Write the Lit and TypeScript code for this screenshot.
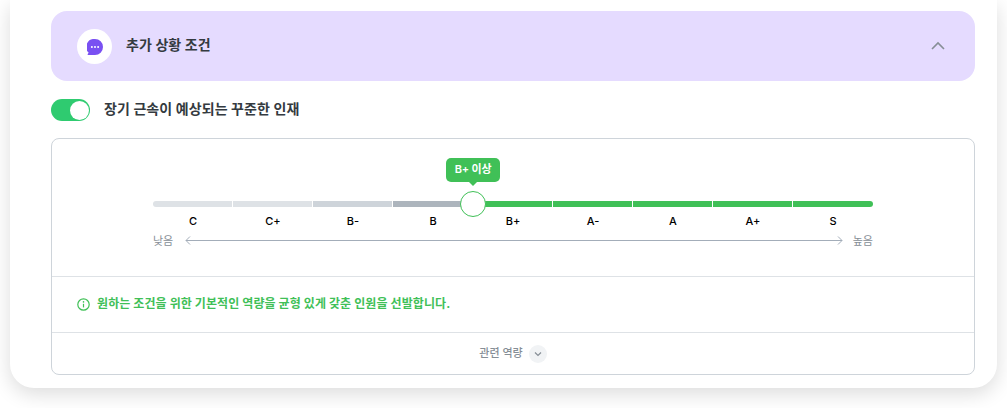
import { LitElement, html, css } from "lit";
import { customElement } from "lit/decorators.js";

const GRADES = ["C", "C+", "B-", "B", "B+", "A-", "A", "A+", "S"];
const SEG = ["seg-1", "seg-1", "seg-2", "seg-3", "on", "on", "on", "on", "on"];

@customElement("app-root")
export class AppRoot extends LitElement {
  static styles = css`
    :host {
      display: block;
      width: 1007px;
      height: 408px;
      overflow: hidden;
      background: #fff;
      font-family: Inter, "Noto Sans CJK KR", sans-serif;
      color: #343a40;
    }
    .card {
      margin: 0 10px;
      height: 388px;
      box-sizing: border-box;
      padding: 11px 22px 13px 41px;
      background: #fff;
      border-radius: 0 0 24px 24px;
      box-shadow: 0 6px 20px rgba(0, 0, 0, 0.14);
    }
    .head {
      height: 70px;
      box-sizing: border-box;
      padding: 0 29px 0 26px;
      display: flex;
      align-items: center;
      background: #e5dbff;
      border-radius: 16px;
    }
    .avatar {
      width: 35px;
      height: 35px;
      margin-top: 1px;
      border-radius: 50%;
      background: #fff;
      display: flex;
      align-items: center;
      justify-content: center;
    }
    .title {
      margin-left: 14px;
      flex: 1;
      font-size: 14px;
      font-weight: 700;
      line-height: 20px;
      letter-spacing: 0.1px;
      padding-bottom: 2px;
    }
    .chev {
      display: block;
    }
    .toggle-row {
      margin-top: 18px;
      display: flex;
      align-items: center;
      height: 22px;
    }
    .toggle {
      width: 39px;
      height: 22px;
      border-radius: 11px;
      background: #2fcb70;
      display: flex;
      justify-content: flex-end;
      align-items: center;
      padding-right: 1px;
      box-sizing: border-box;
    }
    .knob {
      width: 19px;
      height: 19px;
      border-radius: 50%;
      background: #fff;
    }
    .toggle-label {
      margin-left: 14px;
      font-size: 14px;
      font-weight: 700;
      line-height: 20px;
      letter-spacing: 0.1px;
      padding-bottom: 3px;
    }
    .box {
      margin-top: 17px;
      height: 237px;
      box-sizing: border-box;
      border: 1px solid #ced4da;
      border-radius: 8px;
      display: flex;
      flex-direction: column;
    }
    .scale {
      padding: 62px 0 27px 101px;
      border-bottom: 1px solid #dee2e6;
    }
    .track-wrap {
      position: relative;
      width: 720px;
    }
    .track {
      display: grid;
      grid-template-columns: repeat(9, 80px);
      height: 6px;
      border-radius: 3px;
      overflow: hidden;
    }
    .track div {
      border-right: 1px solid #fff;
    }
    .track div:last-child {
      border-right: 0;
    }
    .seg-1 { background: #dee2e6; }
    .seg-2 { background: #ced4da; }
    .seg-3 { background: #adb5bd; }
    .on { background: #40c057; }
    .thumb {
      position: absolute;
      left: 307px;
      top: -10px;
      width: 26px;
      height: 26px;
      box-sizing: border-box;
      border: 1.5px solid #40c057;
      border-radius: 50%;
      background: #fff;
    }
    .tip {
      position: absolute;
      left: 293px;
      top: -43px;
      width: 54px;
      height: 24px;
      box-sizing: border-box;
      padding-bottom: 5px;
      background: #40c057;
      border-radius: 5px;
      color: #fff;
      font-size: 11px;
      font-weight: 600;
      letter-spacing: -0.2px;
      display: flex;
      align-items: center;
      justify-content: center;
    }
    .tip::after {
      content: "";
      position: absolute;
      left: 23px;
      bottom: -4px;
      border-left: 4px solid transparent;
      border-right: 4px solid transparent;
      border-top: 4px solid #40c057;
    }
    .labels {
      margin-top: 6px;
      display: grid;
      grid-template-columns: repeat(9, 80px);
      width: 720px;
      font-size: 11px;
      font-weight: 500;
      line-height: 16px;
      text-align: center;
      color: #000;
    }
    .axis {
      margin-top: 4px;
      width: 720px;
      height: 16px;
      display: flex;
      align-items: center;
      font-size: 11px;
      color: #868e96;
      justify-content: space-between;
    }
    .axis span {
      line-height: 16px;
      padding-bottom: 1px;
    }
    .axis svg {
      display: block;
      margin-left: 1px;
    }
    .info {
      height: 56px;
      box-sizing: border-box;
      border-bottom: 1px solid #dee2e6;
      padding-left: 25px;
      display: flex;
      align-items: center;
      color: #40c057;
      font-size: 12px;
      font-weight: 700;
    }
    .info svg {
      margin-right: 7px;
      display: block;
    }
    .info span {
      line-height: 18px;
      letter-spacing: 0.09px;
      padding-bottom: 2px;
    }
    .foot {
      flex: 1;
      display: flex;
      align-items: center;
      justify-content: center;
      font-size: 11px;
      font-weight: 500;
      color: #868e96;
    }
    .foot-text {
      line-height: 16px;
      padding-bottom: 2px;
    }
    .more {
      margin-left: 6px;
      width: 18px;
      height: 18px;
      border-radius: 50%;
      background: #f1f3f5;
      display: flex;
      align-items: center;
      justify-content: center;
    }
  `;

  render() {
    return html`
      <div class="card">
        <div class="head">
          <div class="avatar">
            <svg width="16" height="16" viewBox="0 0 16 16">
              <path fill="#7950f2" d="M8 0a8 8 0 0 1 0 16H1.2c-.6 0-.9-.7-.5-1.1l1-1.1A8 8 0 0 1 8 0z" />
              <circle cx="4.9" cy="8" r="1" fill="#fff" />
              <circle cx="8" cy="8" r="1" fill="#fff" />
              <circle cx="11.1" cy="8" r="1" fill="#fff" />
            </svg>
          </div>
          <div class="title">추가 상황 조건</div>
          <svg class="chev" width="16" height="16" viewBox="0 0 16 16" fill="none">
            <path d="M2 11 8 5l6 6" stroke="#868e96" stroke-width="1.6" />
          </svg>
        </div>
        <div class="toggle-row">
          <div class="toggle"><div class="knob"></div></div>
          <div class="toggle-label">장기 근속이 예상되는 꾸준한 인재</div>
        </div>
        <div class="box">
          <div class="scale">
            <div class="track-wrap">
              <div class="track">${SEG.map((c) => html`<div class=${c}></div>`)}</div>
              <div class="thumb"></div>
              <div class="tip">B+ 이상</div>
            </div>
            <div class="labels">${GRADES.map((g) => html`<div>${g}</div>`)}</div>
            <div class="axis">
              <span>낮음</span>
              <svg width="658" height="10" viewBox="0 0 658 10" fill="none">
                <path d="M5 .5 1 4.5l4 4M1 4.5h656M653 .5l4 4-4 4" stroke="#a3adb9" stroke-width="1" />
              </svg>
              <span>높음</span>
            </div>
          </div>
          <div class="info">
            <svg width="13" height="13" viewBox="0 0 13 13" fill="none">
              <circle cx="6.5" cy="6.5" r="5.7" stroke="#40c057" stroke-width="1.2" />
              <path d="M6.5 5.8v3.6" stroke="#40c057" stroke-width="1.2" />
              <circle cx="6.5" cy="3.9" r=".8" fill="#40c057" />
            </svg>
            <span>원하는 조건을 위한 기본적인 역량을 균형 있게 갖춘 인원을 선발합니다.</span>
          </div>
          <div class="foot">
            <span class="foot-text">관련 역량</span>
            <span class="more">
              <svg width="8" height="6" viewBox="0 0 8 6" fill="none">
                <path d="M1 1.5 4 4.5l3-3" stroke="#868e96" stroke-width="1.2" />
              </svg>
            </span>
          </div>
        </div>
      </div>
    `;
  }
}
